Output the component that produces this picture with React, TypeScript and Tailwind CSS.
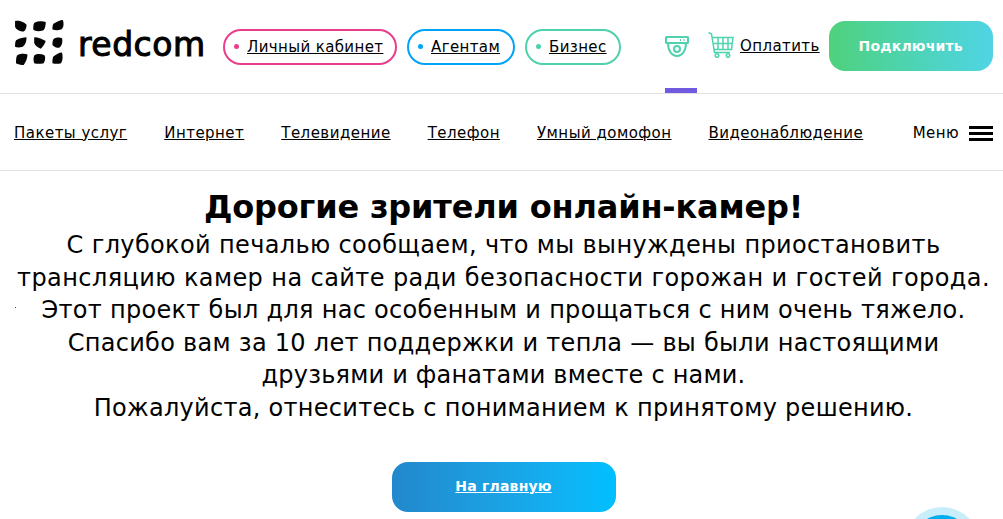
const font = "font-['DejaVu_Sans',sans-serif]";

function LogoDots() {
  const blobs = [
    "M1 1C5 0 11 2 13 5C13 8 12 11 10 12C6 12 2 10 1 7Z",
    "M21 3C25 1 30 1 33 2C33 6 32 10 30 11C26 12 22 12 20 10C20 7 20 5 21 3Z",
    "M41 4C44 2 48 0 51 0C52 4 52 8 49 10C46 11 43 11 40 10C40 8 40 6 41 4Z",
    "M2 21C6 19 10 18 13 18C13 22 12 26 9 28C6 29 3 29 1 28C1 26 1 23 2 21Z",
    "M21 18C25 18 30 20 33 22C32 25 30 28 28 30C25 29 22 27 21 24Z",
    "M41 20C44 18 48 18 50 19C51 22 50 27 47 29C44 29 42 28 40 26C40 24 40 22 41 20Z",
    "M3 37C7 35 11 35 14 36C14 40 12 44 10 47C7 47 4 46 2 45C2 42 2 40 3 37Z",
    "M21 37C24 35 28 35 32 37C33 40 32 43 31 45C27 46 24 46 21 45C20 42 20 40 21 37Z",
    "M41 38C44 36 47 34 50 34C51 38 51 42 49 45C46 46 43 46 40 45C40 42 40 40 41 38Z",
  ];
  return (
    <svg width="52" height="46" viewBox="0 0 52 48" className="-ml-[1px] mb-[8px] shrink-0">
      {blobs.map((d) => (
        <path key={d} d={d} fill="#050505" />
      ))}
    </svg>
  );
}

function Camera() {
  return (
    <svg width="24" height="21" viewBox="0 0 24 21" fill="none" stroke="#4fd3ae" strokeWidth="2">
      <rect x="1" y="1" width="22" height="6" rx="0.5" />
      <path d="M3 7C3 15 7 20 12 20C17 20 21 15 21 7" />
      <circle cx="12" cy="13" r="3" />
      <path d="M15 4H16M18.5 4H19.5" />
    </svg>
  );
}

function Cart() {
  return (
    <svg width="26" height="26" viewBox="0 0 26 26" fill="none" stroke="#4fd3ae" strokeWidth="1.5" className="mb-[4px]">
      <path d="M0.5 0.5L3.5 2L6.5 20.5H22" />
      <path d="M4.3 5.5H25L23.5 17.5H6" />
      <path d="M10 5.5V17.5M15 5.5V17.5M20 5.5V17.5M5.3 11.5H24" />
      <circle cx="9" cy="23.5" r="1.8" />
      <circle cx="20" cy="23.5" r="1.8" />
    </svg>
  );
}

function Pill({ label, border, dot, w }: { label: string; border: string; dot: string; w: string }) {
  return (
    <div className={`flex h-9 items-center gap-[8px] rounded-[18px] border-2 bg-white pl-[9px] ${border} ${w}`}>
      <span className={`h-[5px] w-[5px] shrink-0 rounded-full ${dot}`} />
      <a className="text-[15px] leading-[18px] tracking-[0.38px] text-black underline">{label}</a>
    </div>
  );
}

const nav = ["Пакеты услуг", "Интернет", "Телевидение", "Телефон", "Умный домофон", "Видеонаблюдение"];
const lines = [
  { t: "С глубокой печалью сообщаем, что мы вынуждены приостановить", c: "tracking-[0.36px]" },
  { t: "трансляцию камер на сайте ради безопасности горожан и гостей города.", c: "tracking-[0.41px]" },
  { t: "Этот проект был для нас особенным и прощаться с ним очень тяжело.", c: "tracking-[0.3px]" },
  { t: "Спасибо вам за 10 лет поддержки и тепла — вы были настоящими", c: "tracking-[0.29px]" },
  { t: "друзьями и фанатами вместе с нами.", c: "tracking-[0.21px]" },
  { t: "Пожалуйста, отнеситесь с пониманием к принятому решению.", c: "tracking-[0.29px]" },
];

export default function App() {
  return (
    <div className={`relative h-[519px] w-[1003px] overflow-hidden bg-white text-black ${font}`}>
      <header className="flex h-[94px] items-center border-b border-[#e0e0e0] pl-[14px]">
        <LogoDots />
        <span className="mb-[5px] ml-[13px] mr-[19px] w-[126px] text-[33px] leading-none tracking-[0.5px] [-webkit-text-stroke:1px_#000]">redcom</span>
        <div className="flex gap-[10px]">
          <Pill label="Личный кабинет" border="border-[#e83e8c]" dot="bg-[#e83e8c]" w="w-[174px]" />
          <Pill label="Агентам" border="border-[#00a3f5]" dot="bg-[#00a3f5]" w="w-[108px]" />
          <Pill label="Бизнес" border="border-[#4fd1ae]" dot="bg-[#4fd1ae]" w="w-[96px]" />
        </div>
        <div className="relative ml-[44px] flex h-full w-[32px] items-center justify-start">
          <Camera />
          <span className="absolute bottom-0 left-0 h-[5px] w-[32px] bg-[#7159e0]" />
        </div>
        <div className="ml-[11px] flex items-center gap-[6px]">
          <Cart />
          <a className="text-[15px] tracking-[0.4px] underline">Оплатить</a>
        </div>
        <button className="mb-[2px] ml-[9px] h-[50px] w-[164px] rounded-[16px] bg-gradient-to-r from-[#4fd17b] to-[#50d4e5] pt-[1px] text-[14px] font-bold tracking-[0.2px] text-white">
          Подключить
        </button>
      </header>
      <nav className="flex h-[77px] items-center border-b border-[#e0e0e0] pl-[14px] pr-[10px] pt-[2px]">
        <div className="flex gap-[37px]">
          {nav.map((n) => (
            <a key={n} className="text-[15px] tracking-[0.47px] underline">
              {n}
            </a>
          ))}
        </div>
        <div className="ml-auto flex items-center gap-[10px]">
          <span className="text-[15px] tracking-[0.4px]">Меню</span>
          <div className="flex w-[24px] flex-col gap-[3px]">
            <span className="h-[3px] bg-black" />
            <span className="h-[3px] bg-black" />
            <span className="h-[3px] bg-black" />
          </div>
        </div>
      </nav>
      <main className="flex flex-col items-center pl-[4px] pt-[16px]">
        <h1 className="text-[32px] font-bold leading-[40px] tracking-[-0.17px]">Дорогие зрители онлайн-камер!</h1>
        <div className="mt-[2px] whitespace-nowrap text-center text-[24px] leading-[32.6px]">
          {lines.map((l) => (
            <p key={l.t} className={l.c}>
              {l.t}
            </p>
          ))}
        </div>
        <a className="mt-[37px] flex h-[50px] w-[224px] items-center justify-center rounded-[16px] bg-gradient-to-r from-[#2288cc] to-[#00bfff] text-[14px] font-bold tracking-[0.2px] text-white underline">
          На главную
        </a>
      </main>
      <span className="absolute left-[15px] top-[307px] h-px w-px bg-[#1a3f8a]" />
      <div className="absolute left-[904px] top-[507px] flex h-[76px] w-[76px] items-center justify-center rounded-full bg-[#c8eefb]">
        <div className="h-[60px] w-[60px] rounded-full bg-[#00aeef]" />
      </div>
    </div>
  );
}
